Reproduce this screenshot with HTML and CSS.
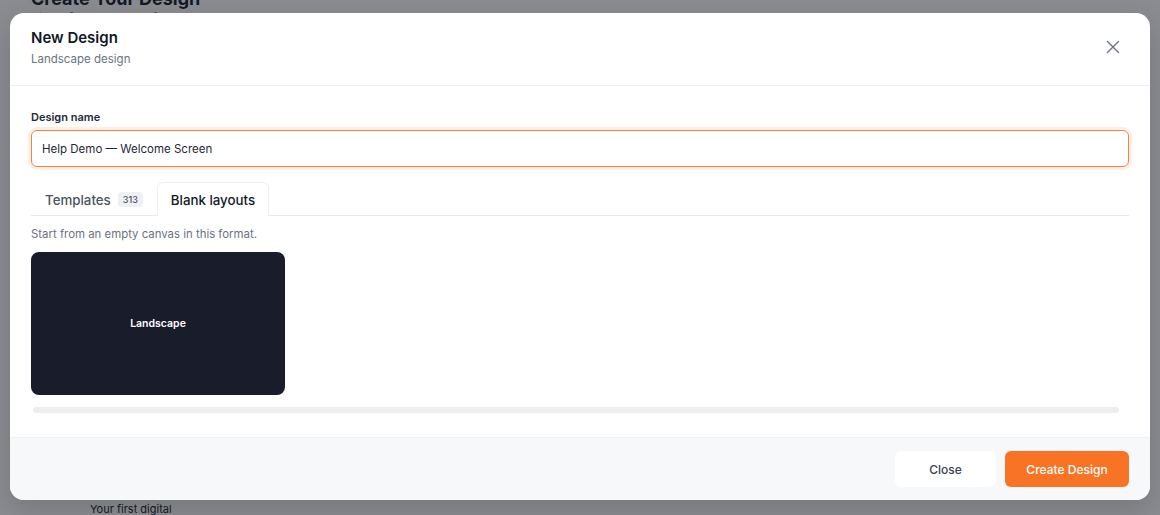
FILE: index.html
```html
<!DOCTYPE html>
<html>
<head>
<meta charset="utf-8">
<link rel="stylesheet" href="styles.css">
</head>
<body>
<div class="page">
  <div class="page-head">
    <h1 class="page-title">Create Your Design</h1>
    <p class="page-sub">Pick a format to start from</p>
  </div>
  <div class="page-foot">Your first digital</div>
</div>
<div class="overlay">
  <div class="modal">
    <div class="modal-head">
      <div>
        <div class="modal-title">New Design</div>
        <div class="modal-sub">Landscape design</div>
      </div>
      <button class="close-x" aria-label="Close">
        <svg width="14" height="14" viewBox="0 0 14 14"><path d="M1.5 1.5 L12.5 12.5 M12.5 1.5 L1.5 12.5" stroke="#6b7280" stroke-width="1.4" stroke-linecap="round" fill="none"/></svg>
      </button>
    </div>
    <div class="modal-body">
      <label class="field-label">Design name</label>
      <div class="input">Help Demo — Welcome Screen</div>
      <div class="tabs">
        <div class="tab">Templates <span class="badge">313</span></div>
        <div class="tab active">Blank layouts</div>
      </div>
      <p class="hint">Start from an empty canvas in this format.</p>
      <div class="cards">
        <div class="card">Landscape</div>
      </div>
      <div class="scrollbar"></div>
    </div>
    <div class="modal-foot">
      <button class="btn btn-ghost">Close</button>
      <button class="btn btn-primary">Create Design</button>
    </div>
  </div>
</div>
</body>
</html>
```
FILE: styles.css
```css
* { box-sizing: border-box; }
html, body { margin: 0; padding: 0; }
body {
  width: 1160px;
  height: 515px;
  overflow: hidden;
  font-family: Inter, "Noto Sans", sans-serif;
  background: #fff;
  position: relative;
}
.page {
  height: 515px;
  display: flex;
  flex-direction: column;
  justify-content: space-between;
}
.page-head { padding: 0 0 0 31px; margin-top: -12px; }
.page-title { margin: 0; font-size: 18px; font-weight: 700; color: #111827; line-height: 22px; }
.page-sub { margin: 0; font-size: 12px; color: #6b7280; line-height: 16px; }
.page-foot { padding-left: 90px; font-size: 11px; color: #111827; line-height: 16px; margin-bottom: -2px; }
.overlay {
  position: absolute;
  inset: 0;
  background: rgba(22, 26, 36, 0.5);
  padding: 13px 10px 0 10px;
}
.modal {
  width: 1140px;
  height: 487px;
  background: #fff;
  border-radius: 14px;
  overflow: hidden;
  display: flex;
  flex-direction: column;
  box-shadow: 0 10px 30px rgba(0,0,0,0.15);
}
.modal-head {
  display: flex;
  justify-content: space-between;
  align-items: center;
  padding: 15px 21px 18px 21px;
  border-bottom: 1px solid #eceef1;
}
.modal-title { font-size: 15px; font-weight: 600; color: #111827; line-height: 20px; }
.modal-sub { font-size: 11.5px; color: #6b7280; line-height: 16px; margin-top: 3px; }
.close-x {
  border: 0; background: transparent; padding: 0;
  width: 14px; height: 14px; margin-right: 9px; margin-top: -2px;
  display: flex;
}
.modal-body {
  flex: 1;
  padding: 24px 21px 24px 21px;
  display: flex;
  flex-direction: column;
}
.field-label { font-size: 11px; font-weight: 600; color: #1f2937; line-height: 14px; }
.input {
  margin-top: 6px;
  height: 37px;
  border: 1px solid #ef8443;
  border-radius: 6px;
  box-shadow: 0 0 0 3px rgba(249, 115, 22, 0.12);
  padding: 0 10px;
  display: flex;
  align-items: center;
  font-size: 11.5px;
  color: #1f2937;
}
.tabs {
  margin-top: 15px;
  display: flex;
  border-bottom: 1px solid #e8eaee;
  height: 34px;
}
.tab {
  padding: 0 13px;
  display: flex;
  align-items: center;
  font-size: 13.3px;
  font-weight: 500;
  color: #4b5563;
  border: 1px solid transparent;
  border-bottom: 0;
  border-radius: 6px 6px 0 0;
  height: 34px;
}
.tab.active {
  color: #111827;
  background: #fff;
  border-color: #eceef1;
  margin-bottom: -1px;
}
.badge {
  margin-left: 7px;
  background: #eef0f3;
  border-radius: 4px;
  font-size: 9px;
  font-weight: 500;
  color: #4b5563;
  padding: 2px 5px;
  line-height: 11px;
}
.hint { margin: 11px 0 0 0; font-size: 11.4px; color: #6b7280; line-height: 14px; }
.cards { margin-top: 11px; display: flex; }
.card {
  width: 254px;
  height: 143px;
  background: #181c2b;
  border-radius: 8px;
  display: flex;
  align-items: center;
  justify-content: center;
  font-size: 10.5px;
  font-weight: 600;
  color: #fff;
}
.scrollbar {
  margin: 12px 10px 0 2px;
  height: 6px;
  border-radius: 3px;
  background: #eeeeef;
}
.modal-foot {
  height: 63px;
  background: #f7f8fa;
  border-top: 1px solid #eef0f3;
  display: flex;
  justify-content: flex-end;
  align-items: center;
  gap: 9px;
  padding: 0 21px;
}
.btn {
  height: 36px;
  border: 0;
  border-radius: 6px;
  font-family: Inter, "Noto Sans", sans-serif;
  font-size: 12px;
  font-weight: 500;
}
.btn-ghost { width: 101px; background: #fff; color: #374151; }
.btn-primary { width: 124px; background: #f97325; color: #fff; }
```
